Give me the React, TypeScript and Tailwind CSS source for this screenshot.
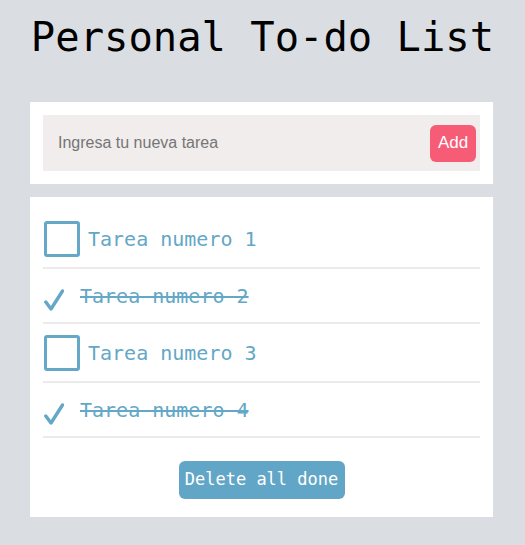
import { useState } from "react";

type Task = { id: number; text: string; done: boolean };

const initialTasks: Task[] = [
  { id: 1, text: "Tarea numero 1", done: false },
  { id: 2, text: "Tarea numero 2", done: true },
  { id: 3, text: "Tarea numero 3", done: false },
  { id: 4, text: "Tarea numero 4", done: true },
];

function CheckMark() {
  return (
    <svg width="20" height="22" viewBox="0 0 20 22" aria-hidden="true">
      <path
        d="M1.8 13 L7 20 L18.5 2"
        fill="none"
        stroke="#64a7c6"
        strokeWidth="3.4"
        strokeLinecap="round"
        strokeLinejoin="round"
      />
    </svg>
  );
}

export default function App() {
  const [tasks, setTasks] = useState(initialTasks);
  const [draft, setDraft] = useState("");

  function addTask(event: React.FormEvent<HTMLFormElement>) {
    event.preventDefault();
    if (!draft.trim()) return;
    setTasks([...tasks, { id: Date.now(), text: draft.trim(), done: false }]);
    setDraft("");
  }

  function toggle(id: number) {
    setTasks(tasks.map((t) => (t.id === id ? { ...t, done: !t.done } : t)));
  }

  return (
    <div className="min-h-screen bg-[#dadee2] pb-7 font-['DejaVu_Sans_Mono',monospace]">
      <h1 className="pt-[13px] text-center text-[40.5px] leading-[48px] text-black">
        Personal To-do List
      </h1>

      <div className="mt-[41px] ml-[30px] w-[463px]">
        <form onSubmit={addTask} className="bg-white p-[13px]">
          <div className="flex h-14 items-center bg-[#f1eded] pl-[15px] pr-1">
            <input
              value={draft}
              onChange={(e) => setDraft(e.target.value)}
              placeholder="Ingresa tu nueva tarea"
              className="min-w-0 flex-1 bg-transparent font-['Liberation_Sans',Arial,sans-serif] text-base text-[#333] outline-none placeholder:text-[#757575]"
            />
            <button
              type="submit"
              className="h-[37px] w-[46px] rounded-md bg-[#f75c77] font-['Liberation_Sans',Arial,sans-serif] text-[17px] text-white"
            >
              Add
            </button>
          </div>
        </form>

        <div className="mt-[13px] bg-white px-[13px] pt-[13px] pb-[18px]">
          <ul>
            {tasks.map((task) => (
              <li
                key={task.id}
                className="flex items-center border-b-2 border-[#ebebeb] pl-px"
              >
                <button
                  type="button"
                  onClick={() => toggle(task.id)}
                  className={
                    task.done
                      ? "flex h-[53px] items-center gap-4 text-left"
                      : "flex h-[57px] items-center gap-2 text-left"
                  }
                >
                  {task.done ? (
                    <span className="mt-2 flex w-5 justify-center">
                      <CheckMark />
                    </span>
                  ) : (
                    <span className="h-9 w-9 rounded-[3px] border-[3px] border-[#64a7c6]" />
                  )}
                  <span
                    className={
                      task.done
                        ? "text-[20px] text-[#64a7c6] line-through decoration-2"
                        : "text-[20px] text-[#64a7c6]"
                    }
                  >
                    {task.text}
                  </span>
                </button>
              </li>
            ))}
          </ul>

          <div className="mt-[23px] flex justify-center">
            <button
              type="button"
              onClick={() => setTasks(tasks.filter((t) => !t.done))}
              className="h-[38px] w-[166px] rounded-md bg-[#62a6c7] text-[17px] text-white"
            >
              Delete all done
            </button>
          </div>
        </div>
      </div>
    </div>
  );
}
